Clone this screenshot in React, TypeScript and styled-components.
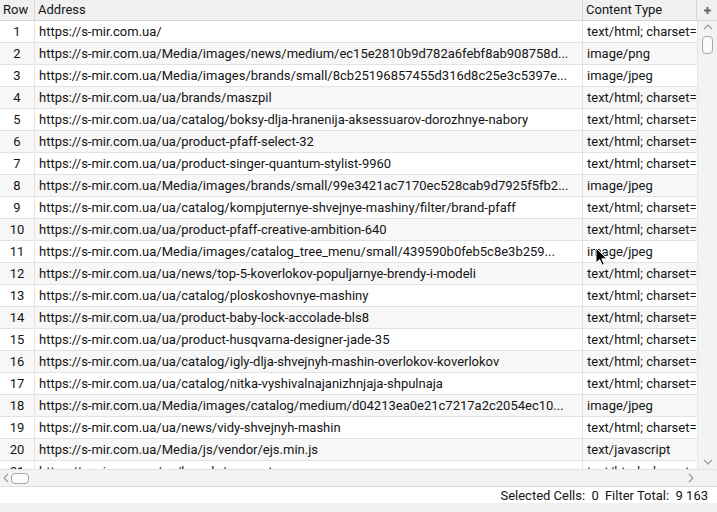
import styled, { createGlobalStyle } from 'styled-components'

const GlobalStyle = createGlobalStyle`
  html, body {
    margin: 0;
    padding: 0;
    background: #f0f0f0;
  }
  body {
    font-family: Roboto, 'Liberation Sans', sans-serif;
    font-size: 13px;
    color: #141414;
  }
`

type Row = { url: string; type: string }

const rows: Row[] = [
  { url: 'https://s-mir.com.ua/', type: 'text/html; charset=UTF-8' },
  { url: 'https://s-mir.com.ua/Media/images/news/medium/ec15e2810b9d782a6febf8ab908758d...', type: 'image/png' },
  { url: 'https://s-mir.com.ua/Media/images/brands/small/8cb25196857455d316d8c25e3c5397e...', type: 'image/jpeg' },
  { url: 'https://s-mir.com.ua/ua/brands/maszpil', type: 'text/html; charset=UTF-8' },
  { url: 'https://s-mir.com.ua/ua/catalog/boksy-dlja-hranenija-aksessuarov-dorozhnye-nabory', type: 'text/html; charset=UTF-8' },
  { url: 'https://s-mir.com.ua/ua/product-pfaff-select-32', type: 'text/html; charset=UTF-8' },
  { url: 'https://s-mir.com.ua/ua/product-singer-quantum-stylist-9960', type: 'text/html; charset=UTF-8' },
  { url: 'https://s-mir.com.ua/Media/images/brands/small/99e3421ac7170ec528cab9d7925f5fb2...', type: 'image/jpeg' },
  { url: 'https://s-mir.com.ua/ua/catalog/kompjuternye-shvejnye-mashiny/filter/brand-pfaff', type: 'text/html; charset=UTF-8' },
  { url: 'https://s-mir.com.ua/ua/product-pfaff-creative-ambition-640', type: 'text/html; charset=UTF-8' },
  { url: 'https://s-mir.com.ua/Media/images/catalog_tree_menu/small/439590b0feb5c8e3b259...', type: 'image/jpeg' },
  { url: 'https://s-mir.com.ua/ua/news/top-5-koverlokov-populjarnye-brendy-i-modeli', type: 'text/html; charset=UTF-8' },
  { url: 'https://s-mir.com.ua/ua/catalog/ploskoshovnye-mashiny', type: 'text/html; charset=UTF-8' },
  { url: 'https://s-mir.com.ua/ua/product-baby-lock-accolade-bls8', type: 'text/html; charset=UTF-8' },
  { url: 'https://s-mir.com.ua/ua/product-husqvarna-designer-jade-35', type: 'text/html; charset=UTF-8' },
  { url: 'https://s-mir.com.ua/ua/catalog/igly-dlja-shvejnyh-mashin-overlokov-koverlokov', type: 'text/html; charset=UTF-8' },
  { url: 'https://s-mir.com.ua/ua/catalog/nitka-vyshivalnajanizhnjaja-shpulnaja', type: 'text/html; charset=UTF-8' },
  { url: 'https://s-mir.com.ua/Media/images/catalog/medium/d04213ea0e21c7217a2c2054ec10...', type: 'image/jpeg' },
  { url: 'https://s-mir.com.ua/ua/news/vidy-shvejnyh-mashin', type: 'text/html; charset=UTF-8' },
  { url: 'https://s-mir.com.ua/Media/js/vendor/ejs.min.js', type: 'text/javascript' },
  { url: 'https://s-mir.com.ua/ua/brands/sewmate', type: 'text/html; charset=UTF-8' }
]

const COLS = '35px 548px 134px'

export default function App() {
  return (
    <>
      <GlobalStyle />
      <Window>
        <TableArea>
          <Header>
            <HeadCell>Row</HeadCell>
            <HeadCell>Address</HeadCell>
            <HeadCell>Content Type</HeadCell>
            <CornerButton>
              <svg width="9" height="9" viewBox="0 0 9 9">
                <path d="M4.5 1v7M1 4.5h7" stroke="#6a6a6a" strokeWidth="2" />
              </svg>
            </CornerButton>
          </Header>
          <BodyWrap>
            <Viewport>
              {rows.map((row, i) => (
                <DataRow key={i} $alt={i % 2 === 1}>
                  <NumCell>{i + 1}</NumCell>
                  <Cell>{row.url}</Cell>
                  <TypeCell>{row.type}</TypeCell>
                </DataRow>
              ))}
              <Cursor width="12" height="19" viewBox="0 0 12 19">
                <path
                  d="M1 1v15l3.6-3.4 2.5 5.6 2.2-1-2.5-5.4H12z"
                  fill="#000"
                  stroke="#fff"
                  strokeWidth="1"
                  strokeLinejoin="round"
                />
              </Cursor>
            </Viewport>
            <VScroll>
              <Arrow viewBox="0 0 10 6" width="10" height="6">
                <path d="M1 5l4-4 4 4" fill="none" stroke="#9a9a9a" strokeWidth="1.2" />
              </Arrow>
              <VThumb />
              <Spacer />
              <Arrow viewBox="0 0 10 6" width="10" height="6">
                <path d="M1 1l4 4 4-4" fill="none" stroke="#9a9a9a" strokeWidth="1.2" />
              </Arrow>
            </VScroll>
          </BodyWrap>
          <HScrollRow>
            <HScroll>
              <Arrow viewBox="0 0 6 10" width="6" height="10">
                <path d="M5 1L1 5l4 4" fill="none" stroke="#9a9a9a" strokeWidth="1.2" />
              </Arrow>
              <HThumb />
              <Spacer />
              <Arrow viewBox="0 0 6 10" width="6" height="10">
                <path d="M1 1l4 4-4 4" fill="none" stroke="#9a9a9a" strokeWidth="1.2" />
              </Arrow>
            </HScroll>
            <ScrollCorner />
          </HScrollRow>
        </TableArea>
        <StatusBar>
          <StatusItem>Selected Cells:&nbsp; 0</StatusItem>
          <StatusItem>Filter Total:&nbsp; 9 163</StatusItem>
        </StatusBar>
        <BottomStrip />
      </Window>
    </>
  )
}

const Window = styled.div`
  width: 717px;
  height: 512px;
  display: flex;
  flex-direction: column;
  background: #f0f0f0;
  overflow: hidden;
`

const TableArea = styled.div`
  display: flex;
  flex-direction: column;
  background: #fff;
`

const Header = styled.div`
  display: grid;
  grid-template-columns: 35px 548px 114px 20px;
  height: 20px;
  background: #f0f0f0;
  border-bottom: 1px solid #d6d6d6;
`

const HeadCell = styled.div`
  display: flex;
  align-items: center;
  padding-left: 3px;
  border-right: 1px solid #d6d6d6;
  white-space: nowrap;
  overflow: hidden;
  font-size: 13px;
  padding-bottom: 1px;
`

const CornerButton = styled.div`
  display: flex;
  align-items: center;
  justify-content: center;
  background: #f0f0f0;
`

const BodyWrap = styled.div`
  display: flex;
  height: 448px;
`

const Viewport = styled.div`
  position: relative;
  width: 697px;
  overflow: hidden;
`

const DataRow = styled.div<{ $alt: boolean }>`
  display: grid;
  grid-template-columns: ${COLS};
  height: 22px;
  border-bottom: 1px solid #e3e3e3;
  box-sizing: border-box;
  background: ${(p) => (p.$alt ? '#f7f7f7' : '#ffffff')};
`

const Cell = styled.div`
  display: block;
  padding: 0 4px;
  line-height: 21px;
  border-right: 1px solid #e3e3e3;
  white-space: nowrap;
  overflow: hidden;
  text-overflow: ellipsis;
  min-width: 0;
`

const NumCell = styled(Cell)`
  text-align: center;
  padding: 0;
`

const TypeCell = styled(Cell)`
  text-overflow: clip;
  border-right: none;
`

const Cursor = styled.svg`
  position: absolute;
  left: 595px;
  top: 226px;
`

const VScroll = styled.div`
  width: 20px;
  display: flex;
  flex-direction: column;
  align-items: center;
  padding: 3px 0 4px;
  box-sizing: border-box;
  background: #f3f3f3;
  border-left: 1px solid #e6e6e6;
`

const Arrow = styled.svg`
  flex: none;
`

const VThumb = styled.div`
  margin-top: 6px;
  width: 11px;
  height: 18px;
  border: 1px solid #a8a8a8;
  border-radius: 4px;
  background: #fbfbfb;
  box-sizing: border-box;
`

const Spacer = styled.div`
  flex: 1;
`

const HScrollRow = styled.div`
  display: flex;
  height: 16px;
  border-top: 1px solid #e3e3e3;
  border-bottom: 1px solid #dcdcdc;
`

const HScroll = styled.div`
  width: 697px;
  display: flex;
  align-items: center;
  padding: 0 3px;
  box-sizing: border-box;
  background: #f3f3f3;
`

const HThumb = styled.div`
  margin-left: 2px;
  width: 18px;
  height: 11px;
  border: 1px solid #a8a8a8;
  border-radius: 4px;
  background: #fbfbfb;
  box-sizing: border-box;
`

const ScrollCorner = styled.div`
  width: 20px;
  background: #f3f3f3;
`

const StatusBar = styled.div`
  height: 16px;
  display: flex;
  justify-content: flex-end;
  align-items: center;
  gap: 6px;
  padding: 0 9px 0 0;
  background: #fff;
  font-size: 13px;
`

const StatusItem = styled.span`
  white-space: nowrap;
`

const BottomStrip = styled.div`
  flex: 1;
  background: #f0f0f0;
`
